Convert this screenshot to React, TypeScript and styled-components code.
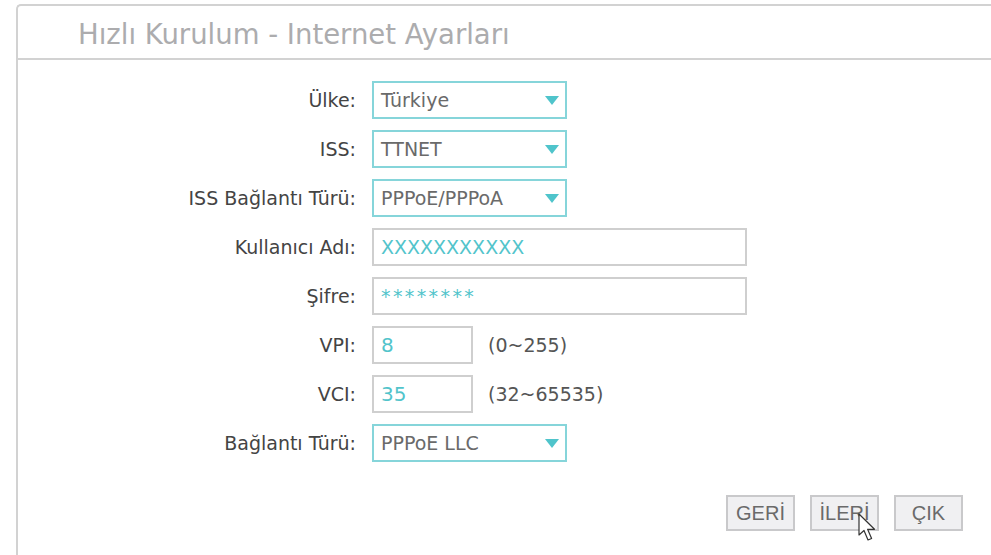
import React from "react";
import styled, { createGlobalStyle } from "styled-components";

interface Field {
  label: string;
  kind: "select" | "text" | "secret" | "short";
  value: string;
  hint?: string;
}

const fields: Field[] = [
  { label: "Ülke:", kind: "select", value: "Türkiye" },
  { label: "ISS:", kind: "select", value: "TTNET" },
  { label: "ISS Bağlantı Türü:", kind: "select", value: "PPPoE/PPPoA" },
  { label: "Kullanıcı Adı:", kind: "text", value: "XXXXXXXXXXX" },
  { label: "Şifre:", kind: "secret", value: "********" },
  { label: "VPI:", kind: "short", value: "8", hint: "(0~255)" },
  { label: "VCI:", kind: "short", value: "35", hint: "(32~65535)" },
  { label: "Bağlantı Türü:", kind: "select", value: "PPPoE LLC" },
];

export default function App() {
  return (
    <>
      <GlobalStyle />
      <Panel>
        <Header>Hızlı Kurulum - Internet Ayarları</Header>
        <Body>
          <Form>
            {fields.map((f) => (
              <React.Fragment key={f.label}>
                <Label>{f.label}</Label>
                <Cell>
                  {f.kind === "select" ? (
                    <SelectBox>
                      <span>{f.value}</span>
                      <svg width="14" height="9" viewBox="0 0 14 9">
                        <path d="M0 0 H14 L7 9 Z" fill="#4fc4cb" />
                      </svg>
                    </SelectBox>
                  ) : (
                    <TextBox $kind={f.kind}>{f.value}</TextBox>
                  )}
                  {f.hint && <Hint>{f.hint}</Hint>}
                </Cell>
              </React.Fragment>
            ))}
          </Form>
          <Actions>
            <ActionButton>GERİ</ActionButton>
            <ActionButton>
              İLERİ
              {/* mouse pointer resting on the button */}
              <Pointer width="19" height="30" viewBox="0 0 19 30">
                <path
                  d="M1 1 L1 22 L6 17.5 L10 27 L13.6 25.5 L9.6 16.3 L16.5 16.3 Z"
                  fill="#fff"
                  stroke="#333"
                  strokeWidth="1.2"
                  strokeLinejoin="round"
                />
              </Pointer>
            </ActionButton>
            <ActionButton>ÇIK</ActionButton>
          </Actions>
        </Body>
      </Panel>
    </>
  );
}

const GlobalStyle = createGlobalStyle`
  html, body {
    margin: 0;
    padding: 0;
    background: #fff;
    overflow: hidden;
  }
  body {
    font-family: "DejaVu Sans", Verdana, sans-serif;
  }
`;

const Panel = styled.div`
  margin: 4px 0 0 16px;
  width: 1000px;
  height: 551px;
  border: 2px solid #d2d2d2;
  border-right: none;
  border-bottom: none;
  border-top-left-radius: 5px;
`;

const Header = styled.div`
  height: 49px;
  padding: 3px 0 0 60px;
  display: flex;
  align-items: center;
  font-size: 27.5px;
  color: #acacae;
  border-bottom: 2px solid #d2d2d2;
`;

const Body = styled.div`
  padding-top: 21px;
`;

const Form = styled.div`
  display: grid;
  grid-template-columns: 338px auto;
  column-gap: 16px;
  row-gap: 11px;
  align-items: center;
`;

const Label = styled.div`
  text-align: right;
  font-size: 19px;
  color: #444;
`;

const Cell = styled.div`
  display: flex;
  align-items: center;
  gap: 15px;
`;

const SelectBox = styled.div`
  box-sizing: border-box;
  width: 195px;
  height: 38px;
  border: 2px solid #86d5da;
  padding: 0 6px 0 7px;
  display: flex;
  align-items: center;
  justify-content: space-between;
  font-size: 19px;
  color: #6a6a6a;
`;

const TextBox = styled.div<{ $kind: string }>`
  box-sizing: border-box;
  width: ${(p) => (p.$kind === "short" ? "101px" : "375px")};
  height: 38px;
  border: 2px solid #cfcfcf;
  padding: 0 7px;
  display: flex;
  align-items: center;
  font-size: ${(p) => (p.$kind === "short" ? "20px" : "19px")};
  letter-spacing: ${(p) => (p.$kind === "secret" ? "2.4px" : "0")};
  color: #52c4cb;
`;

const Hint = styled.span`
  font-size: 19px;
  color: #555;
`;

const Actions = styled.div`
  display: flex;
  justify-content: flex-end;
  gap: 15px;
  margin-top: 33px;
  padding-right: 55px;
`;

const ActionButton = styled.button`
  position: relative;
  box-sizing: border-box;
  width: 69px;
  height: 36px;
  padding: 0;
  background: #f0f0f2;
  border: 2px solid #c9c9cb;
  font-family: "Liberation Sans", Arial, sans-serif;
  font-size: 20px;
  color: #6a6a6a;
`;

const Pointer = styled.svg`
  position: absolute;
  left: 46px;
  top: 16px;
`;
